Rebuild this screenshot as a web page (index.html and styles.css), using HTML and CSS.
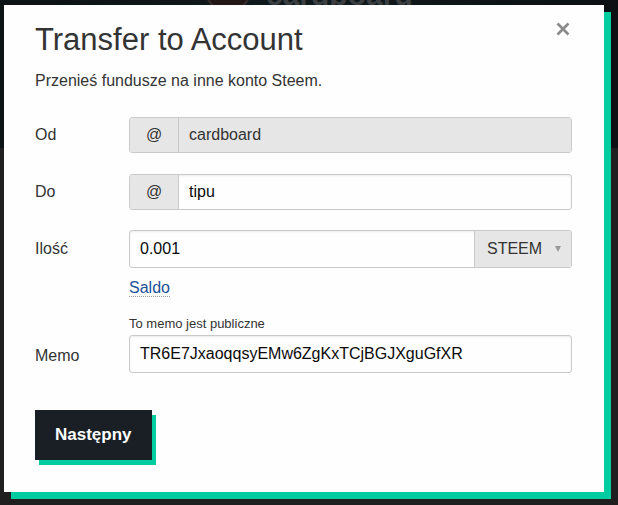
FILE: index.html
```html
<!DOCTYPE html>
<html lang="pl">
<head>
<meta charset="UTF-8" />
<meta name="viewport" content="width=device-width, initial-scale=1" />
<title>Transfer to Account</title>
<link rel="stylesheet" href="styles.css">
</head>
<body>
  <div class="page">
    <div class="page-header">
      <div class="avatar"></div>
      <div class="page-user">cardboard</div>
    </div>
    <div class="page-body"></div>
  </div>

  <div class="reveal">
    <button class="close-button" aria-label="Zamknij">
      <svg width="14" height="14" viewBox="0 0 14 14">
        <path d="M1.5 1.5 L12.5 12.5 M12.5 1.5 L1.5 12.5" stroke="#8a8a8a" stroke-width="2.6" stroke-linecap="butt" fill="none" />
      </svg>
    </button>

    <h3 class="title">Transfer to Account</h3>
    <p class="lead">Przenieś fundusze na inne konto Steem.</p>

    <form class="transfer-form">
      <div class="field field-from">
        <label class="field-label">Od</label>
        <div class="input-group">
          <span class="addon">@</span>
          <input class="field-input" type="text" value="cardboard" disabled />
        </div>
      </div>

      <div class="field field-to">
        <label class="field-label">Do</label>
        <div class="input-group">
          <span class="addon">@</span>
          <input class="field-input" type="text" value="tipu" />
        </div>
      </div>

      <div class="field field-amount">
        <label class="field-label">Ilość</label>
        <div class="input-group">
          <input class="field-input" type="text" value="0.001" />
          <span class="asset">STEEM <span class="caret"></span></span>
        </div>
      </div>
      <div class="field-extra">
        <a class="balance" href="#">Saldo</a>
      </div>

      <div class="field-extra field-note">To memo jest publiczne</div>
      <div class="field field-memo">
        <label class="field-label">Memo</label>
        <input class="field-input memo-input" type="text" value="TR6E7JxaoqqsyEMw6ZgKxTCjBGJXguGfXR" />
      </div>

      <button class="next-button" type="button">Następny</button>
    </form>
  </div>
</body>
</html>
```

FILE: styles.css
```css
body {
  margin: 0;
  background: #1f1f1f;
  font-family: "Liberation Sans", Arial, sans-serif;
  color: #333;
  height: 100vh;
  overflow: hidden;
}
.page {
  height: 100%;
  display: flex;
  flex-direction: column;
}
.page-header {
  height: 148px;
  flex: none;
  background: linear-gradient(90deg, #0d1214 0%, #101a1c 50%, #0c1012 100%);
  display: flex;
  align-items: flex-start;
  padding-left: 204px;
  gap: 14px;
  overflow: hidden;
}
.avatar {
  width: 44px;
  height: 44px;
  margin-top: -36px;
  border-radius: 50%;
  border: 2px solid #3a2a2a;
  background: #231617;
}
.page-user {
  margin-top: -22px;
  font-size: 30px;
  font-weight: bold;
  color: #3b3f41;
}
.page-body {
  flex: 1;
  background: #1f1f1f;
}

/* modal */
.reveal {
  position: absolute;
  top: 5px;
  left: 4px;
  width: 600px;
  box-sizing: border-box;
  padding: 16px 32px 32px 31px;
  background: #fefefe;
  box-shadow: 7px 7px 0 0 #03cda0;
}
.close-button {
  position: absolute;
  top: 17px;
  right: 34px;
  padding: 0;
  border: none;
  background: none;
  width: 14px;
  height: 14px;
  cursor: pointer;
}
.close-button svg { display: block; }
.title {
  margin: 0 0 11px;
  font-size: 31px;
  font-weight: normal;
  line-height: 1.2;
  color: #333;
}
.lead {
  margin: 0 0 24px;
  font-size: 16px;
  line-height: 24px;
  color: #333;
}

.field {
  display: grid;
  grid-template-columns: 94px 1fr;
  align-items: center;
}
.field-from { margin-bottom: 21px; }
.field-to { margin-bottom: 20px; }
.field-label {
  font-size: 16px;
  color: #333;
}
.input-group {
  display: flex;
  height: 36px;
  border: 1px solid #cacaca;
  border-radius: 3px;
  box-sizing: border-box;
  overflow: hidden;
  box-shadow: inset 0 1px 2px rgba(10, 10, 10, 0.08);
}
.field-amount .input-group { height: 38px; }
.addon {
  width: 48px;
  flex: none;
  display: flex;
  align-items: center;
  justify-content: center;
  background: #e6e6e6;
  border-right: 1px solid #cacaca;
  font-size: 16px;
  color: #333;
}
.field-input {
  flex: 1;
  min-width: 0;
  border: none;
  outline: none;
  padding: 0 10px;
  font-family: inherit;
  font-size: 16px;
  color: #0a0a0a;
  background: transparent;
}
.field-input:disabled {
  background: #e6e6e6;
  color: #333;
}
.asset {
  width: 84px;
  flex: none;
  display: flex;
  align-items: center;
  padding-left: 12px;
  gap: 13px;
  background: #e6e6e6;
  border-left: 1px solid #cacaca;
  font-size: 16px;
  color: #333;
}
.caret {
  width: 0;
  height: 0;
  border-left: 3.5px solid transparent;
  border-right: 3.5px solid transparent;
  border-top: 6px solid #999;
}
.field-extra {
  padding-left: 94px;
}
.balance {
  display: inline-block;
  margin-top: 11.5px;
  font-size: 16px;
  line-height: 16px;
  color: #1a5099;
  text-decoration: none;
  border-bottom: 1px dotted #999;
}
.field-note {
  margin-top: 17.5px;
  font-size: 13px;
  line-height: 19px;
  color: #333;
}
.field-memo { margin-top: 2px; }
.field-memo .field-label { padding-top: 3px; }
.memo-input {
  height: 38px;
  box-sizing: border-box;
  border: 1px solid #cacaca;
  border-radius: 3px;
  box-shadow: inset 0 1px 2px rgba(10, 10, 10, 0.08);
}
.next-button {
  display: block;
  margin-top: 37px;
  height: 50px;
  padding: 0 20px;
  border: none;
  background: #1a1f26;
  color: #fff;
  font-family: inherit;
  font-size: 17px;
  font-weight: bold;
  box-shadow: 4px 5px 0 0 #03cda0;
  cursor: pointer;
}
```
